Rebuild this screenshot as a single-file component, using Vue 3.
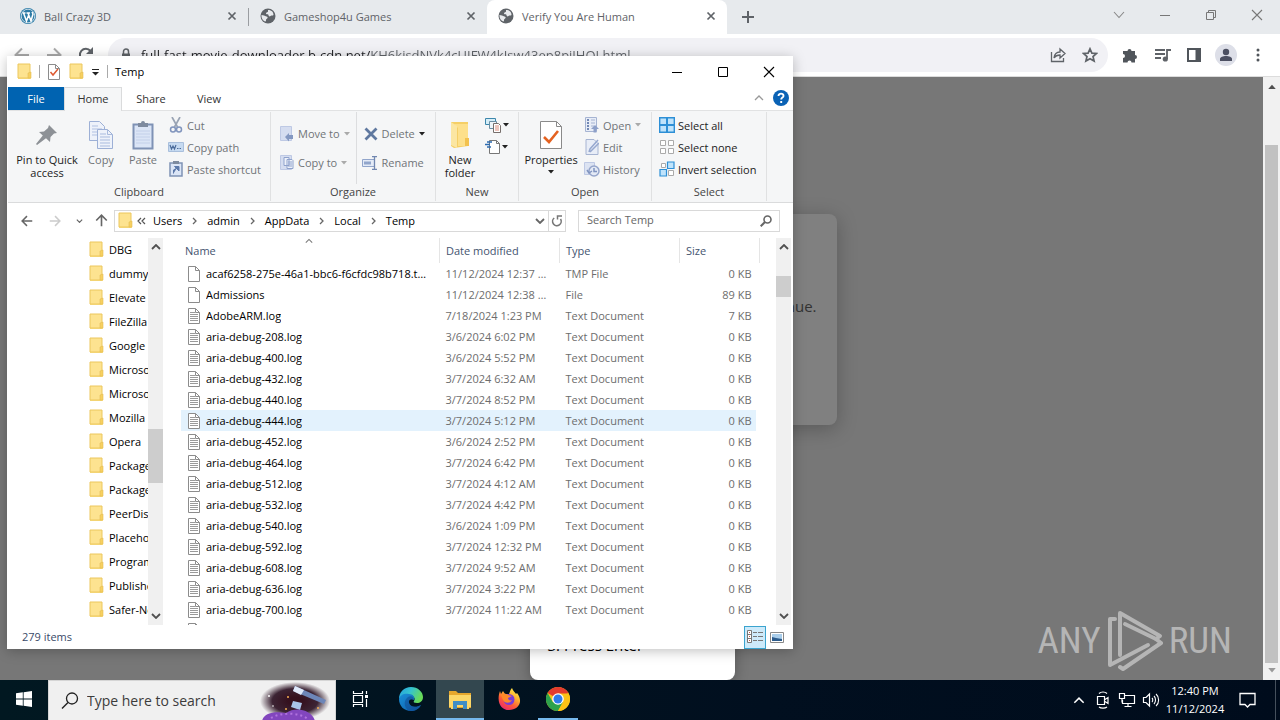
<script setup>
import { h } from 'vue'

const folder = '<path d="M1 1h12v11h1v4H1z" fill="#fbe08a"/><path d="M1 1h12v14H1z" fill="#fde390" stroke="#ecc75c"/><path d="M11 15v-5l3-1v6z" fill="#f7d060" stroke="#e4bd55" stroke-width=".6"/>'
const page = '<path d="M1.5.5h7l4 4v11h-11z" fill="#fff" stroke="#8c8c8c"/><path d="M8.500.5v4h4" fill="none" stroke="#8c8c8c"/>'
const globe = '<circle cx="8" cy="8" r="7.500" fill="#5f6368"/><path d="M1.500 7c2 0 3 1 5 1.500s1 2 0 2.500 0 2-1 2.500C3 13 1.200 10 1.500 7zM8 2c4 0 5.500 2.500 5.500 5-1 1-2 0-3 1s-2 0-2-1-2.500 0-2.500-1.500 2-1 2-2z" fill="#e8eaed"/>'

const icons = {
  folder: ['0 0 15 17', folder],
  file: ['0 0 14 16', page],
  text: ['0 0 14 16', page + '<path d="M3 4.500h5M3 6.500h8M3 8.500h8M3 10.500h8M3 12.500h8" stroke="#9a9a9a"/>'],
  globe: ['0 0 16 16', globe],
  wordpress: ['0 0 16 16', '<circle cx="8" cy="8" r="8" fill="#2c7ba6"/><circle cx="8" cy="8" r="6.800" fill="none" stroke="#e8f1f6" stroke-width=".8"/><path d="M2.500 5h3M6.500 5h3.500M3.500 5l3 8 2-5.500M8 5l3 8 2-7-1-2" fill="none" stroke="#fff" stroke-width="1.500"/>'],
  x: ['0 0 10 10', '<path d="M1.500 1.500l7 7M8.500 1.500l-7 7" stroke="#5f6368" stroke-width="1.700"/>'],
  plus: ['0 0 12 12', '<path d="M6 0v12M0 6h12" stroke="#5f6368" stroke-width="2"/>'],
  down: ['0 0 12 8', '<path d="M1 1l5 5.500L11 1" fill="none" stroke="#888" stroke-width="1.100"/>'],
  min: ['0 0 12 12', '<path d="M1 6.500h10" stroke="currentColor"/>'],
  restore: ['0 0 12 12', '<path d="M1.500 3.500h7v7h-7zM3.500 3V1.500h7v7H9" fill="none" stroke="#777"/>'],
  max: ['0 0 12 12', '<path d="M1.500 1.500h9v9h-9z" fill="none" stroke="currentColor"/>'],
  close: ['0 0 12 12', '<path d="M1 1l10 10M11 1L1 11" stroke="currentColor" stroke-width="1.100"/>'],
  back: ['0 0 16 16', '<path d="M15 8H2M8 1.500L1.500 8 8 14.500" fill="none" stroke="currentColor" stroke-width="2"/>'],
  forward: ['0 0 16 16', '<path d="M1 8h13M8 1.500L14.500 8 8 14.500" fill="none" stroke="currentColor" stroke-width="2"/>'],
  reload: ['0 0 16 16', '<path d="M13.500 10A6 6 0 1 1 12.500 4" fill="none" stroke="#5f6368" stroke-width="2"/><path d="M15 0v7H8z" fill="#5f6368"/>'],
  lock: ['0 0 10 14', '<path d="M1 5.500h8v7H1z" fill="#5f6368"/><path d="M2.500 6V3.500a2.500 2.500 0 0 1 5 0V6" fill="none" stroke="#5f6368" stroke-width="1.500"/>'],
  share: ['0 0 16 16', '<path d="M1.500 5v9.500h12V11" fill="none" stroke="#5f6368" stroke-width="1.300"/><path d="M4 11c.5-4 3-6 6-6V2l5 4.500L10 11V8c-3 0-4.500.8-6 3z" fill="none" stroke="#5f6368" stroke-width="1.300"/>'],
  star: ['0 0 16 16', '<path d="M8 1.800l1.900 4.300 4.600.4-3.500 3 1.100 4.600L8 11.700l-4.100 2.400L5 9.500l-3.500-3 4.600-.4z" fill="none" stroke="#5f6368" stroke-width="1.700"/>'],
  puzzle: ['0 0 16 16', '<path d="M1 4h4.500a2 2 0 1 1 4 0H13v4a2 2 0 1 1 0 4v3.500H9.500a2 2 0 0 0-4 0H1V11a2 2 0 0 0 0-4z" fill="#50555b"/>'],
  music: ['0 0 17 16', '<path d="M1 3h10M1 7h10M1 11h6" stroke="#5f6368" stroke-width="1.800"/><path d="M13 12V3h4" fill="none" stroke="#5f6368" stroke-width="1.800"/><circle cx="11.300" cy="12" r="2.600" fill="#5f6368"/>'],
  panel: ['0 0 14 14', '<path d="M1 1h12v12H1z" fill="none" stroke="#50555b" stroke-width="2"/><path d="M8.500 1H13v12H8.500z" fill="#50555b"/>'],
  person: ['0 0 22 22', '<circle cx="11" cy="11" r="11" fill="#dddfe8"/><circle cx="11" cy="8" r="3.200" fill="#4c5062"/><path d="M5 17v-2c0-4 12-4 12 0v2z" fill="#4c5062"/>'],
  dots: ['0 0 4 16', '<circle cx="2" cy="3" r="1.500" fill="#50555b"/><circle cx="2" cy="8" r="1.500" fill="#50555b"/><circle cx="2" cy="13" r="1.500" fill="#50555b"/>'],
  check: ['0 0 14 16', page + '<path d="M3.500 8l2.500 3 5-6" fill="none" stroke="#dd5a32" stroke-width="1.500"/>'],
  qat: ['0 0 8 8', '<path d="M0 1.500h7" stroke="#222"/><path d="M0 4h7L3.500 7.500z" fill="#222"/>'],
  caret: ['0 0 6 4', '<path d="M0 0h6L3 3.500z" fill="currentColor"/>'],
  up: ['0 0 10 6', '<path d="M1 5l4-4 4 4" fill="none" stroke="currentColor" stroke-width="1.300"/>'],
  dn: ['0 0 10 6', '<path d="M1 1l4 4 4-4" fill="none" stroke="currentColor" stroke-width="1.800"/>'],
  sup: ['0 0 10 6', '<path d="M1 5l4-4 4 4" fill="none" stroke="currentColor" stroke-width="1.800"/>'],
  crumb: ['0 0 5 8', '<path d="M1 1l3 3-3 3" fill="none" stroke="#666" stroke-width="1.300"/>'],
  crumbs: ['0 0 9 8', '<path d="M4 1L1 4l3 3M8 1L5 4l3 3" fill="none" stroke="#555" stroke-width="1.200"/>'],
  help: ['0 0 16 16', '<circle cx="8" cy="8" r="8" fill="#0a62b5"/><path d="M5.500 6c0-3.200 5.200-3 5 0-.1 1.700-2.300 1.500-2.300 3.500M8.200 11v2" fill="none" stroke="#fff" stroke-width="1.900"/>'],
  pin: ['0 0 24 24', '<path d="M14 2l8 8-3 .6-3.500 3.400-.5 5-4-3.800L2 22l-1-1 6.800-8.500L4 9l5-.6L13 5z" fill="#8d9196"/>'],
  copy: ['0 0 26 30', '<path d="M1.500 1.500h10l5 5v14h-15z" fill="#eef2fa" stroke="#9db0d6"/><path d="M4 6h6M4 9h10M4 12h10M4 15h10" stroke="#b1c1e2"/><path d="M9.500 9.500h10l5 5v14h-15z" fill="#eef2fa" stroke="#9db0d6"/><path d="M19.500 9.500v5h5M12 14h6M12 17h10M12 20h10M12 23h10M12 26h10" fill="none" stroke="#a9bbde"/>'],
  paste: ['0 0 22 30', '<path d="M1.500 4.500h19v24h-19z" fill="#dbe5f6" stroke="#7f92b5" stroke-width="2"/><path d="M6 7V3h3a2 2 0 0 1 4 0h3v4z" fill="#7e8b9f"/><path d="M4 11h14M4 14h14M4 17h14M4 20h14M4 23h14" stroke="#c3d0e9"/>'],
  cut: ['0 0 14 16', '<path d="M3 0l5.500 10M11 0L5.500 10" stroke="#9aa4b4" stroke-width="1.700"/><circle cx="4" cy="12.500" r="2.500" fill="none" stroke="#8195bd" stroke-width="1.500"/><circle cx="10" cy="12.500" r="2.500" fill="none" stroke="#8195bd" stroke-width="1.500"/>'],
  path: ['0 0 16 10', '<path d="M.5.5h15v9H.5z" fill="#c6daf1" stroke="#a9bfdc"/><path d="M2 3l1.500 4L5 4l1.500 3L8 3M9 6.500h1.500M11.500 6.500H13" fill="none" stroke="#4c6c9b" stroke-width="1.200"/>'],
  shortcut: ['0 0 14 16', '<path d="M1 2h12v13H1z" fill="#dbe5f6" stroke="#7f92b5" stroke-width="1.500"/><path d="M4 0h6v3H4z" fill="#7e8b9f"/><path d="M4.500 12.500V9L8 7M5.500 5.500H10V10z" fill="#5c79aa" stroke="#5c79aa"/>'],
  move: ['0 0 14 16', '<path d="M.5.5h11v14H.5z" fill="#d5ddf0" stroke="#bec9e4"/><path d="M13 9v4H9v2.500L5 11l4-4v2z" fill="#8498c1"/>'],
  copyto: ['0 0 14 16', '<path d="M.5.5h11v14H.5z" fill="#d5ddf0" stroke="#bec9e4"/><path d="M4 2.500h5v8H4zM7 4.500h5l1 1v8H7z" fill="#eef2fa" stroke="#8fa2cc"/><path d="M8 7h4M8 9h4M8 11h4" stroke="#8fa2cc"/>'],
  del: ['0 0 14 14', '<path d="M1.500 1.500l11 11M12.500 1.500l-11 11" stroke="#5f789f" stroke-width="2.800"/>'],
  rename: ['0 0 17 14', '<path d="M.5 3.500h12v7H.5z" fill="#e4ebf7" stroke="#91a5cb"/><path d="M2 7h7" stroke="#91a5cb" stroke-width="3"/><path d="M10 .7h5M10 13.300h5M12.500 1v12" stroke="#7187b0" stroke-width="1.300"/>'],
  newfolder: ['0 0 20 28', '<path d="M1 1h17v24l-14 2-3-2z" fill="#f5cf66"/><path d="M4 3h14v22H8V7z" fill="#fde08b"/><path d="M1 1l6 4v22l-6-3z" fill="#fbe6a2"/><path d="M15 17h4v8h-4z" fill="#f2c14e"/>'],
  newitem: ['0 0 17 16', '<path d="M.5 1.500h10v6H.5z" fill="#d6eef8" stroke="#3d87ac"/><path d="M4.500 4.500h7v7h-7z" fill="#eef5f9" stroke="#6b8ea3"/><path d="M8.500 6.500h5l2 2v7h-7z" fill="#fff" stroke="#776f6c"/><path d="M10 9h4M10 11h4M10 13h4" stroke="#db8c7a"/>'],
  easy: ['0 0 16 16', '<path d="M4.500 1.500h7l3 3v10h-10z" fill="#fff" stroke="#777"/><path d="M11.500 1.500v3h3" fill="none" stroke="#777"/><path d="M2 3h5M0 5.500h5M2 8h4" stroke="#2c6bb0" stroke-width="1.600"/>'],
  props: ['0 0 22 28', '<path d="M.5.500h16l5 5v22H.5z" fill="#fff" stroke="#8a8a8a"/><path d="M16.500.5v5h5" fill="none" stroke="#8a8a8a"/><path d="M4 16l5 5 9-11" fill="none" stroke="#e46221" stroke-width="2.600"/>'],
  open: ['0 0 14 16', '<path d="M.5.5h11v14H.5z" fill="#e8edf7" stroke="#a6b4d2"/><path d="M2 3h2M2 6h2M2 9h2M2 12h2" stroke="#7389b5" stroke-width="2"/><path d="M6 3h4M6 6h4M6 9h3" stroke="#a6b4d2"/><path d="M10 8l4 4h-2.500v3.500h-3V12H6z" fill="#8da0c9"/>'],
  edit: ['0 0 14 16', '<path d="M1 .5h8l4 4v11H1z" fill="#e8edf7" stroke="#a6b4d2"/><path d="M4 13l1-3 8-9M5 13l9-9" fill="none" stroke="#96a8cf" stroke-width="1.500"/>'],
  history: ['0 0 16 16', '<path d="M.5 1.500h10v12H.5z" fill="#dce3f2" stroke="#bec9e4"/><circle cx="10" cy="10" r="5" fill="#e3e9f5" stroke="#95a5cb" stroke-width="1.500"/><path d="M10 7v3.500h3M3 9l2 3 3-2" fill="none" stroke="#8094c0" stroke-width="1.500"/>'],
  all: ['0 0 16 16', '<path d="M.7.7h14.600v14.600H.7z" fill="#bfe3fb" stroke="#2d8fd6" stroke-width="1.400"/><path d="M8 0v16M0 8h16" stroke="#2d8fd6" stroke-width="2"/>'],
  none: ['0 0 16 16', '<path d="M1.500 1.500h5v5h-5zM9.500 1.500h5v5h-5zM1.500 9.500h5v5h-5zM9.500 9.500h5v5h-5z" fill="#fff" stroke="#aaa"/>'],
  invert: ['0 0 16 16', '<path d="M2.500 2.500h4v4h-4zM9.500 9.500h5v5h-5z" fill="#fff" stroke="#aaa"/><path d="M8.500 1H15v6.500H8.500zM1 8.500h6.500V15H1z" fill="#bfe3fb" stroke="#2d8fd6" stroke-width="1.200"/>'],
  search: ['0 0 12 12', '<circle cx="7.500" cy="4.500" r="3.500" fill="none" stroke="currentColor" stroke-width="1.600"/><path d="M5 7L.7 11.300" stroke="currentColor" stroke-width="2"/>'],
  refresh: ['0 0 12 12', '<path d="M3.200 3A4.300 4.300 0 1 0 9.500 4" fill="none" stroke="#777" stroke-width="1.600"/><path d="M6.500 4.500V1H11" fill="none" stroke="#777" stroke-width="1.500"/>'],
  details: ['0 0 16 14', '<path d="M.5.500h4v12h-4z" fill="#fff" stroke="#777"/><path d="M.5 4.500h4M.5 8.500h4" stroke="#777"/><path d="M2 2.500h1M2 6.500h1M2 10.500h1" stroke="#c45c47"/><path d="M6 2.500h4M11 2.500h5M6 6.500h4M11 6.500h5M6 10.500h4M11 10.500h5" stroke="#777"/>'],
  thumbs: ['0 0 14 11', '<path d="M.5.5h13v10H.5z" fill="#fff" stroke="#888"/><path d="M2 2h10v7H2z" fill="#a9cdea"/><path d="M2 5l4 1 6 1v2H2z" fill="#2b5b8c"/>'],
  windows: ['0 0 16 16', '<path d="M0 2.300l6.800-1v6.300H0zM7.600 1.200L16 0v7.600H7.600zM0 8.400h6.800v6.300L0 13.700zM7.600 8.400H16V16l-8.400-1.200z" fill="#fff"/>'],
  find: ['0 0 18 18', '<circle cx="11" cy="6.500" r="5.500" fill="none" stroke="#222" stroke-width="1.300"/><path d="M7 10.500L1 16.500" stroke="#222" stroke-width="1.500"/>'],
  taskview: ['0 0 17 16', '<path d="M1.500 4.500h9v7h-9zM1.500 0v2.500h9V0M1.500 16v-2.500h9V16M14.500 0v3M14.500 8v8" fill="none" stroke="#fff" stroke-width="1.200"/><path d="M13 4h3v3h-3z" fill="#fff"/>'],
  edge: ['0 0 24 24', '<defs><linearGradient id="ea" x1="0" y1="0" x2="1" y2=".4"><stop stop-color="#249fdf"/><stop offset=".5" stop-color="#35c3cf"/><stop offset="1" stop-color="#68db58"/></linearGradient><linearGradient id="eb" x1="0" y1="0" x2="1" y2="1"><stop stop-color="#1b8fd8"/><stop offset="1" stop-color="#0b5ca8"/></linearGradient></defs><path d="M0 12C0 5 5 0 12 0s12 5 12 10c0 4-3 6-6 6-3 0-4-1-3-2 2-3-1-6-5-6C5 8 1 10 0 12z" fill="url(#ea)"/><path d="M0 12C1 8 5 6 10 7c4 0 6 3 5 6-3-2-6 0-5 3 1 4 7 5 12 2-2 4-6 6-10 6C5 24 0 19 0 12z" fill="url(#eb)"/><path d="M10 24c-5-3-6-10-1-14 3-2 6 0 6 3-3-2-6 0-5 3 1 4 7 5 12 2-3 5-8 7-12 6z" fill="#124b91" opacity=".55"/>'],
  explorer: ['0 0 22 19', '<path d="M0 1h7l2 2h13v15H0z" fill="#e6a72d"/><path d="M0 5h22v12H0z" fill="#fcd768"/><path d="M4 19v-8h14v8h-4v-4H8v4z" fill="#3f8ec6"/><path d="M2 17h2v2H2zM18 17h2v2h-2z" fill="#fcd768"/>'],
  firefox: ['0 0 24 24', '<defs><linearGradient id="fa" x1=".8" y1="0" x2=".2" y2="1"><stop stop-color="#fff04d"/><stop offset=".35" stop-color="#ffb02e"/><stop offset=".65" stop-color="#ff5a38"/><stop offset="1" stop-color="#e72374"/></linearGradient></defs><path d="M3 4l1 3 2-3 2 3 4 0c1-2 1-4 3-6 1 3 3 4 4 6l1-1c7 9 1 17-8 17C4 23-1 15 3 4z" fill="url(#fa)"/><circle cx="12" cy="12.500" r="5.500" fill="#7a3cd8"/><path d="M4 8c3-2 5-1 7 0l4 1-4 2c0 2 2 3 4 2-2 4-8 3-9 0z" fill="#ff8a28"/>'],
  chrome: ['0 0 24 24', '<circle cx="12" cy="12" r="12" fill="#fbc116"/><path d="M12 12L1.600 6A12 12 0 0 1 22.400 6z" fill="#e33b2e"/><path d="M1.600 6A12 12 0 0 0 12 24l5.200-9H6.800z" fill="#2da24c"/><path d="M12 6.500h10.700A12 12 0 0 1 12 24l5-9z" fill="#fbc116"/><circle cx="12" cy="12" r="5.800" fill="#fff"/><circle cx="12" cy="12" r="4.500" fill="#2f7bea"/>'],
  meet: ['0 0 14 18', '<path d="M1.500 5.500h7v8h-7zM9 8.500l3-2v6l-3-2M3 2.500c2-2 6-2 8 0M3 16c2 1.500 6 1.500 8 0" fill="none" stroke="#fff" stroke-width="1.200"/>'],
  network: ['0 0 18 16', '<path d="M6 3.500h10.500v8H4.500V8M1.500 1.500h5v5h-5zM10 12v2.500M6.500 14.500h7M4 6.500v4" fill="none" stroke="#fff" stroke-width="1.200"/>'],
  sound: ['0 0 18 16', '<path d="M1.500 5.500H4L7.500 2v12L4 10.500H1.500z" fill="none" stroke="#fff" stroke-width="1.200"/><path d="M10 6c1 1 1 3 0 4M12 4c2 2 2 6 0 8M14 2c3.500 3 3.500 9 0 12" fill="none" stroke="#fff" stroke-width="1.100"/>'],
  note: ['0 0 17 17', '<path d="M1 1.500h15v11h-5L8.500 15 6 12.500H1z" fill="none" stroke="#fff" stroke-width="1.300"/>'],
  play: ['0 0 56 62', '<g fill="none" stroke="currentColor" stroke-width="4" stroke-linejoin="round" stroke-linecap="round"><path d="M13 45V3l40 23-4 3L18 14"/><path d="M8 9H3v46l38-20"/><path d="M13 57l3 2 38-26-5-4"/></g>'],
  scene: ['0 0 76 40', '<defs><radialGradient id="sg"><stop offset=".2" stop-color="#35111f"/><stop offset=".65" stop-color="#3c2434"/><stop offset="1" stop-color="#f0f0f0"/></radialGradient></defs><ellipse cx="36" cy="20" rx="35" ry="19" fill="url(#sg)"/><path d="M36 5l31 14-2 4-31-13z" fill="#6d86b8"/><path d="M36 5l9 4-3 5-8-4z" fill="#dfe9fa"/><path d="M34 20l9 2-2 7-9-3z" fill="#a9c4e9"/><path d="M3 40c2-9 14-10 24-8 10-7 26-3 29 8z" fill="#8246be"/><path d="M12 37c10-6 30-6 38 2" fill="none" stroke="#b173de" stroke-width="2" stroke-dasharray="2 3"/><g fill="#fff"><circle cx="10" cy="15" r="1"/><circle cx="14" cy="25" r=".8"/></g><g fill="#f4ae52"><circle cx="29" cy="16" r="1"/><circle cx="27" cy="28" r="1"/><circle cx="59" cy="27" r="1"/></g>'],
}

function Icon({ n, w, t }) {
  const [viewBox, innerHTML] = icons[n]
  const [, , vw, vh] = viewBox.split(' ').map(Number)
  const width = w || vw
  return h('svg', { viewBox, width, height: t || Math.round((width * vh) / vw), 'aria-hidden': 'true', innerHTML })
}
Icon.props = ['n', 'w', 't']

const tabs = [
  { t: 'Ball Crazy 3D', i: 'wordpress' },
  { t: 'Gameshop4u Games', i: 'globe' },
  { t: 'Verify You Are Human', i: 'globe' },
]
const tree = ['DBG', 'dummy', 'Elevate', 'FileZilla', 'Google', 'Microsoft', 'Microsoft', 'Mozilla', 'Opera', 'Packages', 'Packages', 'PeerDist', 'Placeholder', 'Programs', 'Publishers', 'Safer-Networking']
const log = (n, d) => ['aria-debug-' + n + '.log', d, 'Text Document', '0 KB', 'text']
const files = [
  ['acaf6258-275e-46a1-bbc6-f6cfdc98b718.tmp', '11/12/2024 12:37 PM', 'TMP File', '0 KB', 'file'],
  ['Admissions', '11/12/2024 12:38 PM', 'File', '89 KB', 'file'],
  ['AdobeARM.log', '7/18/2024 1:23 PM', 'Text Document', '7 KB', 'text'],
  log(208, '3/6/2024 6:02 PM'),
  log(400, '3/6/2024 5:52 PM'),
  log(432, '3/7/2024 6:32 AM'),
  log(440, '3/7/2024 8:52 PM'),
  log(444, '3/7/2024 5:12 PM'),
  log(452, '3/6/2024 2:52 PM'),
  log(464, '3/7/2024 6:42 PM'),
  log(512, '3/7/2024 4:12 AM'),
  log(532, '3/7/2024 4:42 PM'),
  log(540, '3/6/2024 1:09 PM'),
  log(592, '3/7/2024 12:32 PM'),
  log(608, '3/7/2024 9:52 AM'),
  log(636, '3/7/2024 3:22 PM'),
  log(700, '3/7/2024 11:22 AM'),
  log(704, '3/7/2024 2:12 PM'),
]
const crumbs = ['Users', 'admin', 'AppData', 'Local', 'Temp']
</script>

<template>
  <div class="desktop">
    <section class="browser">
      <header class="tabstrip">
        <div v-for="(tab, i) in tabs" :key="tab.t" class="tab" :class="{ active: i === 2, first: i === 0 }">
          <Icon :n="tab.i" :w="16" />
          <span class="tab-title">{{ tab.t }}</span>
          <button aria-label="Close tab"><Icon n="x" :w="10" /></button>
        </div>
        <button class="newtab" aria-label="New tab"><Icon n="plus" :w="12" /></button>
        <div class="winbtns">
          <button aria-label="Search tabs"><Icon n="down" /></button>
          <button aria-label="Minimize"><Icon n="min" /></button>
          <button aria-label="Restore"><Icon n="restore" /></button>
          <button aria-label="Close"><Icon n="close" /></button>
        </div>
      </header>
      <div class="toolbar">
        <button class="dim" aria-label="Back"><Icon n="back" /></button>
        <button class="dim" aria-label="Forward"><Icon n="forward" /></button>
        <button aria-label="Reload"><Icon n="reload" /></button>
        <div class="omnibox">
          <Icon n="lock" />
          <input aria-label="Address" value="full-fast-movie-downloader.b-cdn.net/KH6kjsdNVk4cUIFW4kIsw43ep8piJHOI.html" />
          <button aria-label="Share"><Icon n="share" /></button>
          <button aria-label="Bookmark"><Icon n="star" /></button>
        </div>
        <button aria-label="Extensions"><Icon n="puzzle" /></button>
        <button aria-label="Media"><Icon n="music" /></button>
        <button aria-label="Side panel"><Icon n="panel" /></button>
        <button aria-label="Profile"><Icon n="person" /></button>
        <button aria-label="Menu"><Icon n="dots" /></button>
      </div>
      <div class="viewport">
        <main class="webpage">
          <div class="dialog">continue.</div>
          <div class="steps">3. Press Enter</div>
          <div class="watermark"><span>ANY</span><Icon n="play" /><span>RUN</span></div>
        </main>
        <div class="pagebar">
          <Icon n="caret" :w="8" class="flip" />
          <div class="pagethumb"></div>
          <Icon n="caret" :w="8" class="soft" />
        </div>
      </div>
    </section>

    <section class="explorer">
      <header class="title">
        <Icon n="folder" /><i class="bar"></i><Icon n="check" /><Icon n="folder" /><Icon n="qat" /><i class="bar"></i>
        <span class="title-text">Temp</span>
        <button aria-label="Minimize"><Icon n="min" /></button>
        <button aria-label="Maximize"><Icon n="max" /></button>
        <button aria-label="Close"><Icon n="close" /></button>
      </header>
      <nav class="rtabs">
        <button class="filetab">File</button>
        <button class="hometab">Home</button>
        <button>Share</button>
        <button>View</button>
        <span class="rhelp"><Icon n="up" /><Icon n="help" /></span>
      </nav>
      <div class="ribbon">
        <div class="group clipboard">
          <div class="tools">
            <button class="big dark"><span class="pic"><Icon n="pin" /></span>Pin to Quick access</button>
            <button class="big"><span class="pic"><Icon n="copy" /></span>Copy</button>
            <button class="big"><span class="pic"><Icon n="paste" /></span>Paste</button>
            <div class="stack">
              <button><span class="ic"><Icon n="cut" /></span>Cut</button>
              <button><span class="ic"><Icon n="path" /></span>Copy path</button>
              <button><span class="ic"><Icon n="shortcut" /></span>Paste shortcut</button>
            </div>
          </div>
          <div class="caption">Clipboard</div>
        </div>
        <div class="group organize">
          <div class="tools">
            <div class="stack loose">
              <button><span class="ic"><Icon n="move" /></span>Move to<Icon n="caret" class="lite" /></button>
              <button><span class="ic"><Icon n="copyto" /></span>Copy to<Icon n="caret" class="lite" /></button>
            </div>
            <div class="stack loose second">
              <button><span class="ic"><Icon n="del" /></span>Delete<Icon n="caret" class="black" /></button>
              <button><span class="ic"><Icon n="rename" /></span>Rename</button>
            </div>
          </div>
          <div class="caption">Organize</div>
        </div>
        <div class="group new">
          <div class="tools">
            <button class="big dark"><span class="pic"><Icon n="newfolder" /></span>New folder</button>
            <div class="stack">
              <button aria-label="New item" class="tight"><Icon n="newitem" /><Icon n="caret" class="black" /></button>
              <button aria-label="Easy access" class="tight"><Icon n="easy" /><Icon n="caret" class="black" /></button>
            </div>
          </div>
          <div class="caption">New</div>
        </div>
        <div class="group open">
          <div class="tools">
            <button class="big dark"><span class="pic"><Icon n="props" /></span>Properties<Icon n="caret" class="under" /></button>
            <div class="stack">
              <button><span class="ic"><Icon n="open" /></span>Open<Icon n="caret" class="lite" /></button>
              <button><span class="ic"><Icon n="edit" /></span>Edit</button>
              <button><span class="ic"><Icon n="history" /></span>History</button>
            </div>
          </div>
          <div class="caption">Open</div>
        </div>
        <div class="group select">
          <div class="tools">
            <div class="stack darks">
              <button><span class="ic"><Icon n="all" /></span>Select all</button>
              <button><span class="ic"><Icon n="none" /></span>Select none</button>
              <button><span class="ic"><Icon n="invert" /></span>Invert selection</button>
            </div>
          </div>
          <div class="caption">Select</div>
        </div>
      </div>
      <div class="location">
        <button aria-label="Back" class="nav"><Icon n="back" :w="12" /></button>
        <button aria-label="Forward" class="nav faint"><Icon n="forward" :w="12" /></button>
        <button aria-label="Recent" class="recent"><Icon n="dn" :w="7" /></button>
        <button aria-label="Up" class="nav upward"><Icon n="back" :w="13" class="turn" /></button>
        <div class="crumbbar">
          <Icon n="folder" />
          <Icon n="crumbs" class="lead" />
          <template v-for="(c, i) in crumbs" :key="c">
            <a href="#">{{ c }}</a>
            <Icon v-if="i < 4" n="crumb" />
          </template>
          <button aria-label="History" class="drop"><Icon n="dn" /></button>
          <button aria-label="Refresh" class="refresh"><Icon n="refresh" /></button>
        </div>
        <label class="searchbox">
          <input aria-label="Search Temp" placeholder="Search Temp" />
          <Icon n="search" />
        </label>
      </div>
      <div class="panes">
        <ul class="tree">
          <li v-for="(f, i) in tree" :key="i"><Icon n="folder" /><span>{{ f }}</span></li>
        </ul>
        <div class="sbar treebar"><Icon n="sup" /><div class="thumb"></div><Icon n="dn" /></div>
        <div class="listing">
          <table>
            <colgroup><col /><col class="c-date" /><col class="c-type" /><col class="c-size" /></colgroup>
            <thead>
              <tr><th>Name<Icon n="up" class="sort" /></th><th>Date modified</th><th>Type</th><th>Size</th></tr>
            </thead>
            <tbody>
              <tr v-for="(f, i) in files" :key="f[0]" :class="{ hover: i === 7 }">
                <td><div class="fname"><Icon :n="f[4]" /><span>{{ f[0] }}</span></div></td>
                <td>{{ f[1] }}</td>
                <td>{{ f[2] }}</td>
                <td>{{ f[3] }}</td>
              </tr>
            </tbody>
          </table>
        </div>
        <div class="sbar listbar"><Icon n="sup" /><div class="thumb"></div><Icon n="dn" /></div>
      </div>
      <footer class="status">
        <span>279 items</span>
        <button class="on" aria-label="Details"><Icon n="details" /></button>
        <button aria-label="Large icons"><Icon n="thumbs" /></button>
      </footer>
    </section>

    <footer class="taskbar">
      <button class="app" aria-label="Start"><Icon n="windows" /></button>
      <label class="tasksearch">
        <Icon n="find" />
        <input aria-label="Type here to search" placeholder="Type here to search" />
        <Icon n="scene" />
      </label>
      <button class="app taskview" aria-label="Task view"><Icon n="taskview" /></button>
      <button class="app" aria-label="Edge"><Icon n="edge" /></button>
      <button class="app current" aria-label="File Explorer"><Icon n="explorer" /></button>
      <button class="app" aria-label="Firefox"><Icon n="firefox" /></button>
      <button class="app running" aria-label="Chrome"><Icon n="chrome" /></button>
      <div class="tray">
        <button aria-label="Hidden icons"><Icon n="up" :w="12" /></button>
        <button aria-label="Meet now"><Icon n="meet" /></button>
        <button aria-label="Network"><Icon n="network" /></button>
        <button aria-label="Volume"><Icon n="sound" /></button>
        <div class="clock"><div>12:40 PM</div><div>11/12/2024</div></div>
        <button aria-label="Notifications" class="notes"><Icon n="note" /></button>
        <i class="peek"></i>
      </div>
    </footer>
  </div>
</template>

<style>
body { margin: 0; overflow: hidden; }
</style>

<style scoped>
* { box-sizing: border-box; }
.desktop { position: relative; display: flex; flex-direction: column; height: 100vh; font-family: "Open Sans", "Noto Sans", sans-serif; font-size: 11px; color: #000; }
:deep(svg) { display: block; flex: none; }
button { display: flex; align-items: center; justify-content: center; flex: none; margin: 0; padding: 0; border: 0; background: none; font: inherit; color: inherit; }
input { min-width: 0; flex: 1; border: 0; padding: 0; background: none; font: inherit; outline: 0; }

.browser { flex: 1; min-height: 0; display: flex; flex-direction: column; }
.tabstrip { display: flex; height: 34px; background: #e7eaed; color: #5f6368; }
.tab { display: flex; align-items: center; width: 240px; padding: 0 11px 2px 12px; border-left: 1px solid transparent; }
.tab.first { width: 247px; padding-left: 19px; padding-right: 10px; }
.tab:nth-child(2) { background: linear-gradient(#9a9da1, #9a9da1) 0 8px / 1px 18px no-repeat; }
.tab.active { background: #fff; border-radius: 8px 8px 0 0; padding-left: 10px; }
.tab-title { flex: 1; margin-left: 8px; }
.newtab { width: 42px; }
.winbtns { display: flex; margin-left: auto; color: #777; height: 29px; }
.winbtns button { width: 46px; }
.toolbar { display: flex; align-items: center; height: 43px; padding: 0 6px 0 6px; background: #fff; border-bottom: 1px solid #dcdcdc; color: #5f6368; }
.toolbar > button { width: 32px; height: 32px; }
.toolbar > .dim { color: #aaa; }
.omnibox { flex: 1; display: flex; align-items: center; height: 34px; margin: 0 6px 0 6px; padding: 0 2px 0 13px; border-radius: 17px; background: #f1f1f5; }
.omnibox input { margin-left: 10px; font-size: 13px; color: transparent; background: linear-gradient(90deg, #202124 229px, #5f6368 229px); -webkit-background-clip: text; background-clip: text; }
.omnibox button { width: 32px; }
.viewport { flex: 1; display: flex; min-height: 0; }
.webpage { position: relative; flex: 1; overflow: hidden; background: #777; }
.dialog { position: absolute; top: 137px; left: calc(50% - 206px); width: 411px; height: 211px; padding: 81px 20px 0; border-radius: 8px; background: #808080; box-shadow: 0 4px 20px rgba(0, 0, 0, .25); text-align: right; font-size: 15px; line-height: 22px; color: #333; }
.steps { position: absolute; bottom: 0; left: calc(50% - 102px); width: 205px; padding: 24px 18px; border-radius: 8px; background: #fff; box-shadow: 0 2px 14px rgba(0, 0, 0, .3); font-size: 15px; line-height: 22px; }
.watermark { position: absolute; right: 31px; bottom: 8px; display: flex; align-items: center; gap: 6px; color: #b5b5b5; font-family: "Roboto Condensed", "Liberation Sans Narrow", Roboto, sans-serif; font-size: 37px; line-height: 62px; }
.pagebar { display: flex; flex-direction: column; align-items: center; justify-content: space-between; width: 17px; padding: 7px 0; background: #f1f1f1; color: #505050; }
.pagethumb { width: 13px; flex: 1; margin: 56px 0 5px; background: #c1c1c1; }
.flip { transform: rotate(180deg); }
.soft { color: #999; }

.explorer { position: absolute; inset: 56px 487px 71px 7px; display: flex; flex-direction: column; background: #fff; border-left: 1px solid #fff; box-shadow: 0 2px 12px rgba(0, 0, 0, .25); overflow: hidden; }
.title { display: flex; align-items: center; flex: none; height: 31px; padding-left: 9px; gap: 8px; }
.title .bar { width: 1px; height: 13px; margin: 0 -1px; background: #aaa; }
.title-text { flex: 1; }
.title button { width: 38px; height: 30px; }
.title button:last-child { margin-right: 5px; }
.rtabs { display: flex; flex: none; height: 24px; color: #333; }
.rtabs button { width: 58px; height: 24px; padding-bottom: 2px; }
.rtabs .filetab { width: 56px; background: #0063b1; color: #fff; }
.rtabs .hometab { border: 1px solid #dadbdc; border-bottom: 0; background: #f5f6f7; position: relative; z-index: 1; }
.rhelp { display: flex; align-items: center; gap: 9px; margin-left: auto; padding: 0 4px 2px 0; color: #999; }
.ribbon { display: flex; flex: none; height: 93px; margin-top: -1px; background: #f5f6f7; border-top: 1px solid #e1e2e3; border-bottom: 1px solid #dadbdc; color: #707478; }
.group { display: flex; flex-direction: column; border-right: 1px solid #e0e1e2; margin: 1px 0; }
.tools { flex: 1; display: flex; }
.caption { height: 17px; line-height: 16px; text-align: center; color: #444; }
.clipboard { width: 263px; }
.organize { width: 165px; }
.new { width: 83px; }
.open { width: 133px; }
.select { width: 115px; }
.big { flex-direction: column; justify-content: flex-start; width: 42px; padding-top: 4px; line-height: 13px; text-align: center; }
.dark, .darks { color: #222; }
.pic { display: flex; align-items: center; justify-content: center; height: 37px; }
.clipboard .big.dark { width: 66px; margin-left: 6px; }
.clipboard .stack { margin-left: 4px; }
.new .big { width: 48px; }
.open .big { width: 64px; }
.under { margin-top: 4px; }
.stack { display: flex; flex-direction: column; align-items: flex-start; padding-top: 2px; margin-left: 1px; }
.stack button { height: 22px; gap: 3px; white-space: nowrap; }
.ic { display: flex; justify-content: center; width: 16px; }
.loose { padding-top: 7px; margin-left: 8px; }
.loose button { height: 29px; }
.second { border-left: 1px solid #dcdddf; padding-left: 6px; margin-left: 6px; }
.lite { color: #aaa; margin-left: 1px; }
.black { color: #222; margin-left: 1px; }
.stack .tight { gap: 0; }
.select .stack { margin-left: 7px; }
.location { display: flex; align-items: center; flex: none; height: 35px; padding: 0 13px 0 5px; color: #666; }
.nav { width: 28px; }
.upward { width: 25px; }
.faint { color: #ccc; }
.recent { width: 20px; }
.turn { transform: rotate(90deg); }
.crumbbar { flex: 1; display: flex; align-items: center; gap: 10px; height: 22px; padding-left: 3px; border: 1px solid #d9d9d9; }
.crumbbar .lead { margin: 0 -3px 0 -6px; }
.crumbbar a { padding-bottom: 1px; color: #000; text-decoration: none; }
.drop { margin-left: auto; }
.refresh { width: 17px; height: 20px; margin-left: -7px; border-left: 1px solid #d9d9d9; }
.searchbox { display: flex; align-items: center; width: 202px; height: 22px; margin-left: 12px; padding: 0 7px 0 8px; border: 1px solid #d9d9d9; }
.searchbox input { padding-bottom: 2px; }
input::placeholder { color: #666; opacity: 1; }
.panes { flex: 1; display: flex; min-height: 0; padding-right: 2px; }
.tree { width: 140px; margin: -1px 0 0; padding: 0 0 0 81px; list-style: none; overflow: hidden; }
.tree li { display: flex; align-items: center; gap: 5px; height: 24px; white-space: nowrap; }
.sbar { display: flex; flex-direction: column; align-items: center; width: 15px; padding: 6px 0; background: #f0f0f0; color: #505050; }
.thumb { width: 15px; background: #cdcdcd; margin-bottom: auto; }
.treebar .thumb { height: 54px; margin-top: 179px; }
.listbar .thumb { height: 21px; margin-top: 26px; }
.listing { flex: 1; min-width: 0; margin-left: 18px; padding-right: 16px; overflow: hidden; }
table { width: 100%; table-layout: fixed; border-collapse: collapse; color: #6d6d6d; }
.c-date, .c-type { width: 120px; }
.c-size { width: 80px; }
th { position: relative; height: 25px; padding: 0 0 1px 6px; text-align: left; font-weight: 400; color: #44546f; border-right: 1px solid #e5e5e5; }
th:first-child { padding-left: 4px; }
.sort { position: absolute; left: calc(50% - 5px); top: 0; width: 8px; color: #777; }
td { height: 21px; padding: 0 12px 0 6px; white-space: nowrap; overflow: hidden; text-overflow: ellipsis; }
td:first-child { padding: 0 7px 0 6px; color: #000; }
td:last-child { text-align: right; padding: 0 8px 0 0; }
.fname { display: flex; align-items: center; gap: 5px; }
.fname span { overflow: hidden; text-overflow: ellipsis; }
.hover td { background: #e3f2fd; }
.hover td:last-child { background: linear-gradient(#e3f2fd, #e3f2fd) 0 0 / calc(100% - 4px) 100% no-repeat; }
.status { display: flex; align-items: center; flex: none; height: 24px; padding: 0 5px 0 14px; color: #3a4a68; }
.status span { flex: 1; padding-bottom: 2px; }
.status button { width: 22px; height: 23px; }
.status .on { border: 1px solid #3ba4cf; background: #cdeafa; }

.taskbar { display: flex; flex: none; height: 40px; background: linear-gradient(90deg, #011821, #010f1f 60%, #000c1c); color: #fff; }
.app { width: 49px; border-bottom: 2px solid transparent; }
.app:first-child { width: 48px; }
.taskview { width: 50px; padding-right: 2px; }
.current { width: 48px; margin-left: 1px; background: #33474f; border-color: #76b9ed; }
.running { background: linear-gradient(#76b9ed, #76b9ed) center 38px / 40px 2px no-repeat; background-origin: border-box; background-clip: border-box; }
.tasksearch { display: flex; align-items: center; width: 288px; padding-left: 12px; background: #f0f0f0; border: 1px solid #d5d5d5; border-bottom: 0; font-size: 14px; }
.tasksearch input { margin-left: 8px; }
.tasksearch input::placeholder { color: #3c3c3c; }
.tray { display: flex; margin-left: auto; padding-right: 4px; }
.tray button { width: 24px; }
.clock { display: flex; flex-direction: column; justify-content: center; width: 64px; text-align: center; line-height: 18px; }
.tray .notes { width: 48px; padding-right: 8px; }
.peek { width: 1px; background: #45505c; }
</style>
